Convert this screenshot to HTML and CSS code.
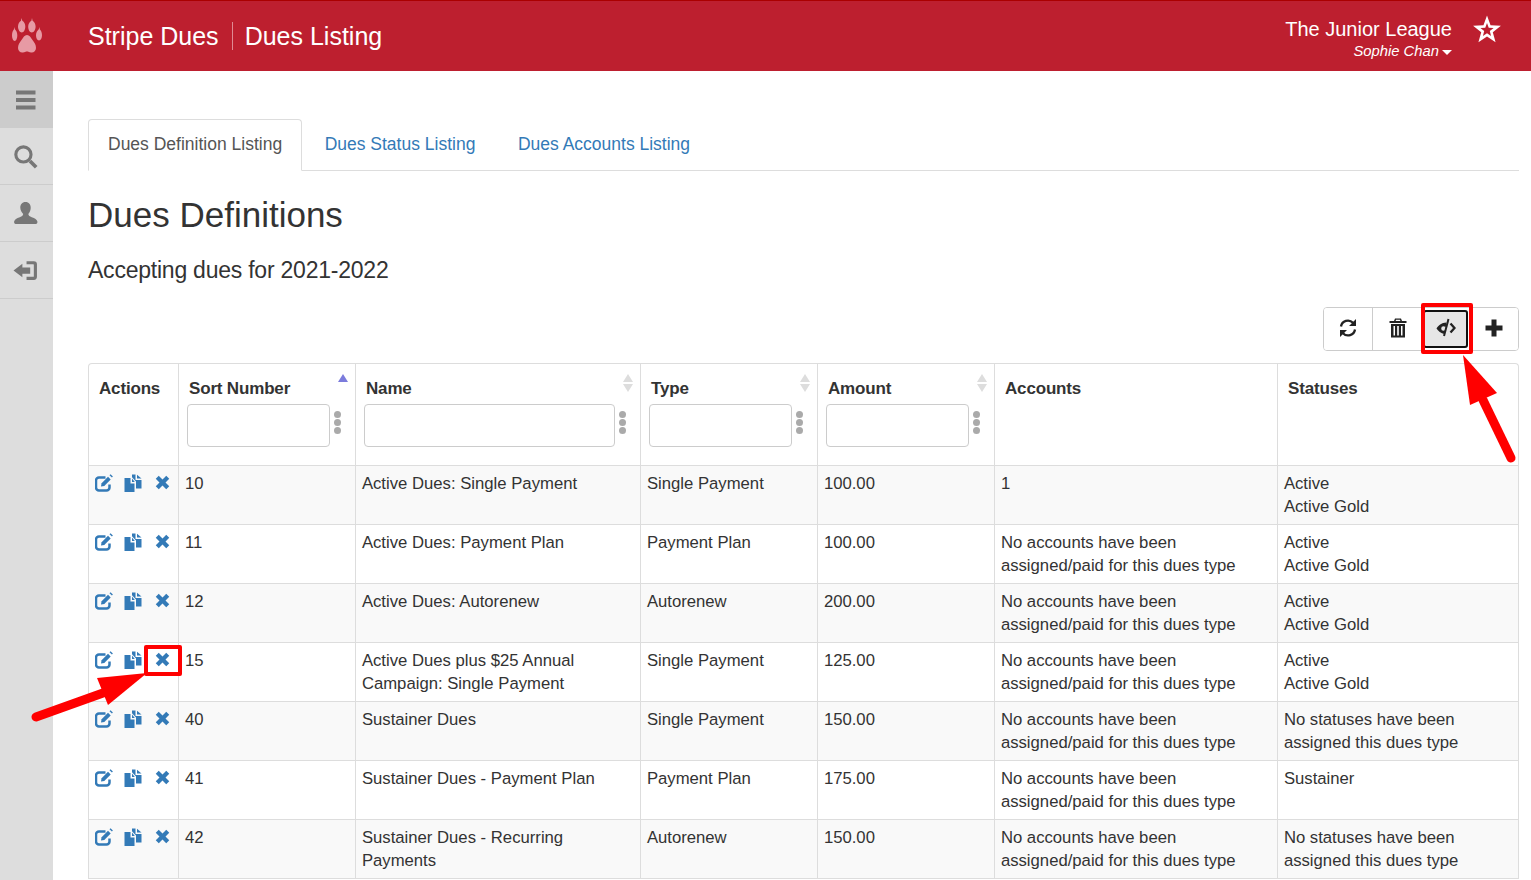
FILE: index.html
```html
<!DOCTYPE html>
<html lang="en">
<head>
<meta charset="utf-8">
<title>Dues Listing</title>
<link rel="stylesheet" href="styles.css">
</head>
<body>
<svg class="sprite" aria-hidden="true">
  <defs>
    <symbol id="i-edit" viewBox="0 0 18 18">
      <path d="M14.500 10.500v3a3 3 0 0 1-3 3H4a3 3 0 0 1-3-3V6.500a3 3 0 0 1 3-3h6.500" fill="none" stroke="currentColor" stroke-width="2.500"/>
      <path d="M6 12.500l.6-3.300L13 2.800l2.700 2.700-6.400 6.400z" fill="currentColor"/>
      <path d="M14.500 1.200l1-1 2.400 2.400-1 1z" fill="currentColor"/>
    </symbol>
    <symbol id="i-copy" viewBox="0 0 18 18">
      <path d="M.5 4H6.500V9.500H10.500V18H.5z" fill="currentColor"/>
      <path d="M8 4.500l2.800 3.500H8z" fill="currentColor"/>
      <path d="M8 .5h3.500v5.500h6v8.500H12V7.500L8 3.300z" fill="currentColor"/>
      <path d="M13 .8l4.500 3.800H13z" fill="currentColor"/>
    </symbol>
    <symbol id="i-x" viewBox="0 0 16 16">
      <path d="M4 .8L8 4.800l4-4L15.200 4l-4 4 4 4-3.200 3.200-4-4-4 4L.8 12l4-4-4-4z" fill="currentColor"/>
    </symbol>
  </defs>
</svg>

<header class="topbar">
  <svg class="paw" viewBox="0 0 30 36">
    <path d="M15 17c-2.500 0-3.700 2.500-5.500 5C7.500 24.500 6 27 6 30c0 3 2.500 5 5 4.500 1.500-.3 2.700-1 4-1s2.500.7 4 1c2.500.5 5-1.500 5-4.500 0-3-1.500-5.500-3.500-8-1.800-2.500-3-5-5.500-5z"/>
    <path d="M9.500 0l.8 2.800c2 1.200 3 3.300 3 5.700 0 3.200-1.500 6-3.500 6s-3.800-2.800-3.800-6c0-2.500 1.300-4.700 3-5.700z"/>
    <path d="M20 0l-.6 2.800c-2 1.200-3.200 3.300-3.200 5.700 0 3.200 1.500 6 3.600 6s3.800-2.800 3.800-6c0-2.500-1.300-4.700-3-5.700z"/>
    <path d="M2.200 9l.7 2.300c1.500 1.300 2.400 3.500 2.400 6 0 3-1 5.700-2.600 5.700S0 20.300 0 17.300c0-2.500.8-4.700 2-6z"/>
    <path d="M27.500 9l-.7 2.300c-1.600 1.300-2.800 3.500-2.800 6 0 3 1.300 5.200 3 5.200s3-2.200 3-5.200c0-2.500-.8-4.700-2.200-6z"/>
  </svg>
  <div class="crumbs">
    <span class="crumb">Stripe Dues</span>
    <span class="crumb crumb-sep">Dues Listing</span>
  </div>
  <div class="account">
    <div class="org">The Junior League</div>
    <div class="user">Sophie Chan<span class="caret"></span></div>
  </div>
  <svg class="star" viewBox="0 0 28 27">
    <path fill="#fff" fill-rule="evenodd" d="M14 .5l3.300 9.100 9.700.4-7.600 6 2.600 9.500-8-5.500-8 5.500 2.600-9.500L1 10l9.700-.4zM14 7.500l-1.600 4.400-4.600.2 3.600 2.900-1.200 4.500 3.800-2.600 3.800 2.600-1.200-4.500 3.600-2.900-4.600-.2z"/>
  </svg>
</header>

<div class="shell">
  <nav class="sidebar">
    <div class="side-item side-item-active">
      <svg class="side-icon" viewBox="0 0 20 20"><path d="M0 .5h19.500v4H0zM0 8h19.500v4H0zM0 15.500h19.500v4H0z"/></svg>
    </div>
    <div class="side-item">
      <svg class="side-icon" viewBox="0 0 24 24"><circle cx="10" cy="10" r="7.300" fill="none" stroke="#777" stroke-width="3"/><path d="M15 17.500l2.500-2.500 6 6-2.500 2.500z"/></svg>
    </div>
    <div class="side-item">
      <svg class="side-icon" viewBox="0 0 24 24"><path d="M12 1c3.300 0 5 2.400 5 5.500 0 2.500-1 4.500-2.300 6 .2 1.600 1.200 2.300 3.300 3 3 1 5 2 5.500 4.500 0 1-.5 2-1.500 2H2.500c-1 0-1.500-1-1.500-2 .5-2.500 2.500-3.500 5.500-4.500 2.100-.7 3.100-1.400 3.300-3C8.500 11 7 9 7 6.500 7 3.400 8.700 1 12 1z"/></svg>
    </div>
    <div class="side-item">
      <svg class="side-icon" viewBox="0 0 24 24"><path d="M13 3h7a3 3 0 0 1 3 3v12a3 3 0 0 1-3 3h-7v-3h6.500a.5.500 0 0 0 .5-.5v-11a.5.500 0 0 0-.5-.5H13z"/><path d="M.5 12L9 5.500V9h7.500v6H9v3.500z"/></svg>
    </div>
  </nav>

  <main class="content">
    <ul class="tabs">
      <li class="tab tab-active">Dues Definition Listing</li>
      <li class="tab">Dues Status Listing</li>
      <li class="tab">Dues Accounts Listing</li>
    </ul>

    <h2 class="title">Dues Definitions</h2>
    <h4 class="subtitle">Accepting dues for 2021-2022</h4>

    <div class="toolbar-row">
      <div class="toolbar">
        <button class="tool" type="button">
          <svg class="tool-icon" viewBox="0 0 20 20"><path d="M3 8.500A7 7 0 0 1 15 4.800M17 11.500A7 7 0 0 1 5 15.200" fill="none" stroke="#222" stroke-width="2.300"/><path d="M18 1v7h-7zM2 19v-7h7z" fill="#222"/></svg>
        </button>
        <button class="tool tool-trash" type="button">
          <svg class="tool-icon" viewBox="0 0 20 20"><path d="M7 .5h6l1 2.500h4.500v2h-17V3H6zM8 1.700L7.600 3h4.800L12 1.700z" fill="#222" fill-rule="evenodd"/><path d="M3 6h14v13.500H3zM5.500 8v9.500h1.500V8zM9.200 8v9.500h1.600V8zM13 8v9.500h1.500V8z" fill="#222" fill-rule="evenodd"/></svg>
        </button>
        <button class="tool tool-active" type="button">
          <svg class="tool-icon" viewBox="0 0 20 20">
            <path d="M10.500 4.500C5.500 4.500 2 8 .5 10.500 2 13 5 15.500 8.500 16zM7.500 8.200a2.300 2.300 0 1 0 0 4.600 2.300 2.300 0 0 0 0-4.600z" fill="#222" fill-rule="evenodd"/>
            <path d="M12.500 1L8 18" stroke="#222" stroke-width="2"/>
            <path d="M14.500 5.500l4 4.500-4 4.500" fill="none" stroke="#222" stroke-width="2.300"/>
          </svg>
        </button>
        <button class="tool" type="button">
          <svg class="tool-icon" viewBox="0 0 20 20"><path d="M7.500 1.500h5v6h6v5h-6v6h-5v-6h-6v-5h6z" fill="#222"/></svg>
        </button>
      </div>
    </div>

    <div class="table-wrap">
      <table class="grid">
        <colgroup>
          <col class="c-actions"><col class="c-sort"><col class="c-name"><col class="c-type"><col class="c-amount"><col class="c-accounts"><col class="c-statuses">
        </colgroup>
        <thead>
          <tr>
            <th class="th-actions"><span class="th-label">Actions</span></th>
            <th>
              <span class="th-label">Sort Number</span><span class="sort sort-asc"></span>
              <div class="filter"><input class="filter-input" type="text"><span class="dots"><i></i><i></i><i></i></span></div>
            </th>
            <th>
              <span class="th-label">Name</span><span class="sort"></span>
              <div class="filter"><input class="filter-input" type="text"><span class="dots"><i></i><i></i><i></i></span></div>
            </th>
            <th>
              <span class="th-label">Type</span><span class="sort"></span>
              <div class="filter"><input class="filter-input" type="text"><span class="dots"><i></i><i></i><i></i></span></div>
            </th>
            <th>
              <span class="th-label">Amount</span><span class="sort"></span>
              <div class="filter"><input class="filter-input" type="text"><span class="dots"><i></i><i></i><i></i></span></div>
            </th>
            <th><span class="th-label">Accounts</span></th>
            <th><span class="th-label">Statuses</span></th>
          </tr>
        </thead>
        <tbody>
          <tr>
            <td class="acts"><svg class="act a-edit"><use href="#i-edit"/></svg><svg class="act a-copy"><use href="#i-copy"/></svg><svg class="act a-x"><use href="#i-x"/></svg></td>
            <td>10</td><td>Active Dues: Single Payment</td><td>Single Payment</td><td>100.00</td><td>1</td><td>Active<br>Active Gold</td>
          </tr>
          <tr>
            <td class="acts"><svg class="act a-edit"><use href="#i-edit"/></svg><svg class="act a-copy"><use href="#i-copy"/></svg><svg class="act a-x"><use href="#i-x"/></svg></td>
            <td>11</td><td>Active Dues: Payment Plan</td><td>Payment Plan</td><td>100.00</td><td>No accounts have been assigned/paid for this dues type</td><td>Active<br>Active Gold</td>
          </tr>
          <tr>
            <td class="acts"><svg class="act a-edit"><use href="#i-edit"/></svg><svg class="act a-copy"><use href="#i-copy"/></svg><svg class="act a-x"><use href="#i-x"/></svg></td>
            <td>12</td><td>Active Dues: Autorenew</td><td>Autorenew</td><td>200.00</td><td>No accounts have been assigned/paid for this dues type</td><td>Active<br>Active Gold</td>
          </tr>
          <tr>
            <td class="acts"><svg class="act a-edit"><use href="#i-edit"/></svg><svg class="act a-copy"><use href="#i-copy"/></svg><svg class="act a-x"><use href="#i-x"/></svg></td>
            <td>15</td><td>Active Dues plus $25 Annual Campaign: Single Payment</td><td>Single Payment</td><td>125.00</td><td>No accounts have been assigned/paid for this dues type</td><td>Active<br>Active Gold</td>
          </tr>
          <tr>
            <td class="acts"><svg class="act a-edit"><use href="#i-edit"/></svg><svg class="act a-copy"><use href="#i-copy"/></svg><svg class="act a-x"><use href="#i-x"/></svg></td>
            <td>40</td><td>Sustainer Dues</td><td>Single Payment</td><td>150.00</td><td>No accounts have been assigned/paid for this dues type</td><td>No statuses have been assigned this dues type</td>
          </tr>
          <tr>
            <td class="acts"><svg class="act a-edit"><use href="#i-edit"/></svg><svg class="act a-copy"><use href="#i-copy"/></svg><svg class="act a-x"><use href="#i-x"/></svg></td>
            <td>41</td><td>Sustainer Dues - Payment Plan</td><td>Payment Plan</td><td>175.00</td><td>No accounts have been assigned/paid for this dues type</td><td>Sustainer</td>
          </tr>
          <tr>
            <td class="acts"><svg class="act a-edit"><use href="#i-edit"/></svg><svg class="act a-copy"><use href="#i-copy"/></svg><svg class="act a-x"><use href="#i-x"/></svg></td>
            <td>42</td><td>Sustainer Dues - Recurring Payments</td><td>Autorenew</td><td>150.00</td><td>No accounts have been assigned/paid for this dues type</td><td>No statuses have been assigned this dues type</td>
          </tr>
        </tbody>
      </table>
    </div>
  </main>
</div>

<div class="mark mark-toggle"></div>
<div class="mark mark-delete"></div>
<svg class="arrow arrow-up" viewBox="0 0 60 110">
  <path d="M48 104L20 46" stroke="#f00" stroke-width="9" stroke-linecap="round" fill="none"/>
  <path d="M0 1L34 39 7 51z" fill="#f00"/>
</svg>
<svg class="arrow arrow-left" viewBox="0 0 120 50">
  <path d="M5 46L72 22" stroke="#f00" stroke-width="9" stroke-linecap="round" fill="none"/>
  <path d="M116 2L66 7 77 34z" fill="#f00"/>
</svg>
</body>
</html>
```

FILE: styles.css
```css
* { box-sizing: border-box; }
html, body { margin: 0; height: 880px; overflow: hidden; background: #fff; }
body { font-family: "Liberation Sans", Arial, sans-serif; font-size: 16.7px; line-height: 23px; color: #333; position: relative; }
.sprite { width: 0; height: 0; display: block; position: absolute; }

.topbar { height: 71px; background: #bd1f2f; border-top: 1px solid #a00; display: flex; align-items: center; color: #fff; }
.paw { width: 30px; height: 36px; margin-left: 12px; fill: #e79aa4; flex: none; }
.crumbs { margin-left: 46px; display: flex; align-items: center; flex: 1; font-size: 25px; }
.crumb { line-height: 28px; }
.crumb-sep { margin-left: 13px; padding-left: 12px; border-left: 1px solid #e08a93; }
.account { text-align: right; padding-top: 6px; }
.org { font-size: 20px; line-height: 24px; }
.user { font-size: 14.8px; line-height: 20px; font-style: italic; }
.caret { display: inline-block; width: 0; height: 0; margin-left: 3px; vertical-align: middle; border-top: 5px solid #fff; border-left: 5px solid transparent; border-right: 5px solid transparent; }
.star { width: 30px; height: 29px; margin: 0 29px 14px 20px; flex: none; }

.shell { display: flex; height: 809px; }
.sidebar { width: 53px; background: #ddd; flex: none; }
.side-item { height: 57px; border-bottom: 1px solid #ccc; padding-right: 2px; display: flex; align-items: center; justify-content: center; }
.side-item-active { background: #ccc; padding-top: 1px; }
.side-icon { width: 20px; height: 20px; fill: #777; display: block; }
.sidebar .side-item:not(:first-child) .side-icon { width: 25px; height: 25px; }

.content { flex: 1; min-width: 0; padding: 48px 12px 0 35px; }
.tabs { list-style: none; margin: 0; padding: 0; display: flex; border-bottom: 1px solid #ddd; height: 52px; }
.tab { color: #337ab7; font-size: 17.5px; padding: 13px 20px 0; margin-left: 2.5px; height: 52px; line-height: 24px; }
.tab-active { color: #555; background: #fff; border: 1px solid #ddd; border-bottom-color: #fff; border-radius: 4px 4px 0 0; margin-left: 0; padding: 12px 19px 0; }
.title { margin: 24px 0 0; font-size: 35px; font-weight: 400; line-height: 40px; }
.subtitle { margin: 20px 0 0; font-size: 23px; font-weight: 400; line-height: 30px; letter-spacing: -.01em; }

.toolbar-row { display: flex; justify-content: flex-end; margin-top: 22px; }
.toolbar { display: flex; border: 1px solid #ccc; border-radius: 4px; height: 44px; }
.tool { width: 49px; border: 0; border-right: 1px solid #ccc; background: #fff; padding: 0 0 3px; display: flex; align-items: center; justify-content: center; }
.tool:first-child { border-radius: 3px 0 0 3px; }
.tool:last-child { border-right: 0; width: 47px; border-radius: 0 3px 3px 0; padding-right: 2px; }
.tool-trash { padding-left: 1px; }
.tool-active { background: #e6e6e6; outline: 2px solid #111; outline-offset: -2px; border-radius: 3px; margin: 2px 3px 2px 1px; width: 45px; border-right: 0; }
.tool-icon { width: 20px; height: 20px; display: block; }

.table-wrap { margin-top: 12px; border: 1px solid #ddd; border-radius: 4px 4px 0 0; border-bottom: 0; }
.grid { width: 100%; border-collapse: collapse; table-layout: fixed; }
.c-actions { width: 89px; }
.c-sort { width: 177px; }
.c-name { width: 285px; }
.c-type { width: 177px; }
.c-amount { width: 177px; }
.c-accounts { width: 283px; }
.grid th { text-align: left; vertical-align: top; padding: 13px 10px 0 10.5px; height: 101px; border-left: 1px solid #ddd; border-bottom: 1px solid #ddd; position: relative; font-size: 17px; font-weight: 700; line-height: 23px; letter-spacing: -.01em; }
.grid th:first-child, .grid td:first-child { border-left: 0; }
.grid .th-actions { padding-left: 10px; }
.th-label { display: block; }
.grid td { padding: 6px 5px 6px 6.4px; vertical-align: top; height: 59px; border-left: 1px solid #ddd; border-bottom: 1px solid #ddd; }
.grid tbody tr:nth-child(odd) td { background: #f9f9f9; }
.grid .acts { white-space: nowrap; padding-left: 6px; }
.filter { display: flex; align-items: center; margin: 4px 3.500px 0 -2.500px; position: relative; }
.filter-input { flex: 1; min-width: 0; height: 43px; border: 1px solid #ccc; border-radius: 4px; background: #fff; }
.dots { width: 7px; margin: 0 0 6px 4px; display: flex; flex-direction: column; gap: 1px; flex: none; }
.dots i { display: block; width: 7px; height: 7px; border-radius: 50%; background: #aaa; }
.sort { position: absolute; right: 7px; top: 10px; width: 0; height: 0; border-left: 5px solid transparent; border-right: 5px solid transparent; border-bottom: 8px solid #ddd; }
.sort::after { content: ""; position: absolute; left: -5px; top: 10px; border-left: 5px solid transparent; border-right: 5px solid transparent; border-top: 8px solid #ddd; }
.sort-asc { border-bottom-color: #7b7bdc; }
.sort-asc::after { display: none; }

.act { display: inline-block; color: #337ab7; vertical-align: top; margin-top: 2px; }
.a-edit { width: 18px; height: 18px; }
.a-copy { width: 18px; height: 18px; margin-left: 11px; }
.a-x { width: 15px; height: 15px; margin-left: 13px; margin-top: 3px; }

.mark { position: absolute; border: 4px solid #f00; border-radius: 2px; }
.mark-toggle { left: 1421px; top: 303px; width: 52px; height: 51px; }
.mark-delete { left: 144px; top: 645px; width: 38px; height: 31px; }
.arrow { position: absolute; overflow: visible; }
.arrow-up { left: 1463px; top: 354px; width: 60px; height: 110px; }
.arrow-left { left: 31px; top: 671px; width: 120px; height: 50px; }
```
